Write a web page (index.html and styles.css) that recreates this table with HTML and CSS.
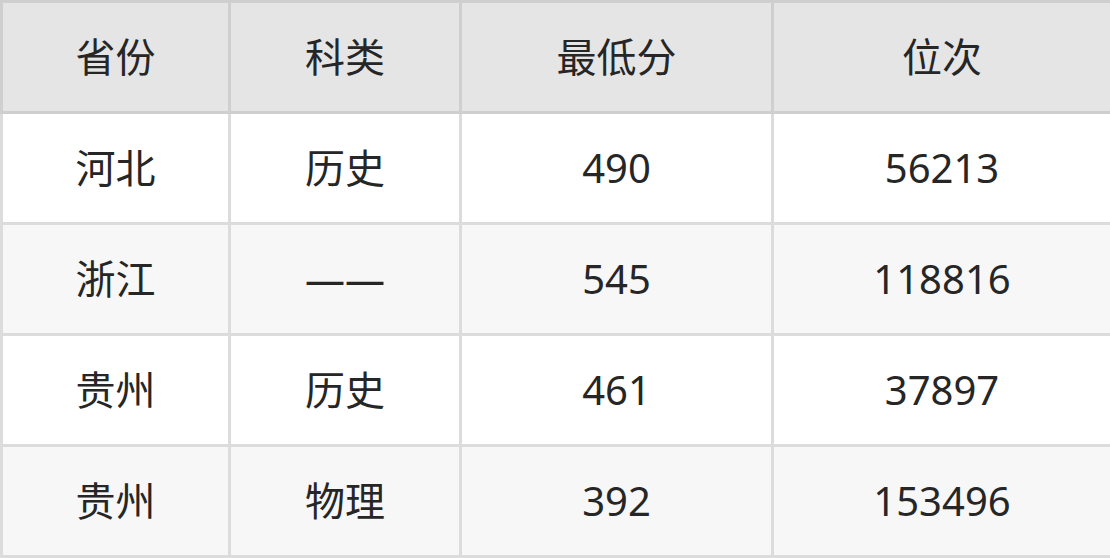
FILE: index.html
```html
<!DOCTYPE html>
<html lang="zh">
<head>
<meta charset="utf-8">
<link rel="stylesheet" href="styles.css">
</head>
<body>
<table class="score-table">
  <colgroup>
    <col class="c1"><col class="c2"><col class="c3"><col class="c4">
  </colgroup>
  <thead>
    <tr><th>省份</th><th>科类</th><th>最低分</th><th>位次</th></tr>
  </thead>
  <tbody>
    <tr><td>河北</td><td>历史</td><td>490</td><td>56213</td></tr>
    <tr><td>浙江</td><td>——</td><td>545</td><td>118816</td></tr>
    <tr><td>贵州</td><td>历史</td><td>461</td><td>37897</td></tr>
    <tr><td>贵州</td><td>物理</td><td>392</td><td>153496</td></tr>
  </tbody>
</table>
</body>
</html>
```

FILE: styles.css
```css
html, body {
  margin: 0;
  padding: 0;
  background: #ffffff;
}
.score-table {
  border-collapse: collapse;
  table-layout: fixed;
  width: 1110px;
  font-family: "Noto Sans", "Noto Sans CJK SC", sans-serif;
  font-size: 40px;
  color: #262626;
}
.c1 { width: 228px; }
.c2 { width: 231px; }
.c3 { width: 312px; }
.c4 { width: 339px; }
.score-table th,
.score-table td {
  border: 3px solid #dcdcdc;
  height: 108px;
  padding: 0;
  text-align: center;
  vertical-align: middle;
  font-weight: normal;
  line-height: 1;
  box-sizing: content-box;
}
.score-table th {
  background: #e5e5e5;
  border-color: #cfcfcf;
}
.score-table tbody tr:nth-child(even) td {
  background: #f7f7f7;
}
```
